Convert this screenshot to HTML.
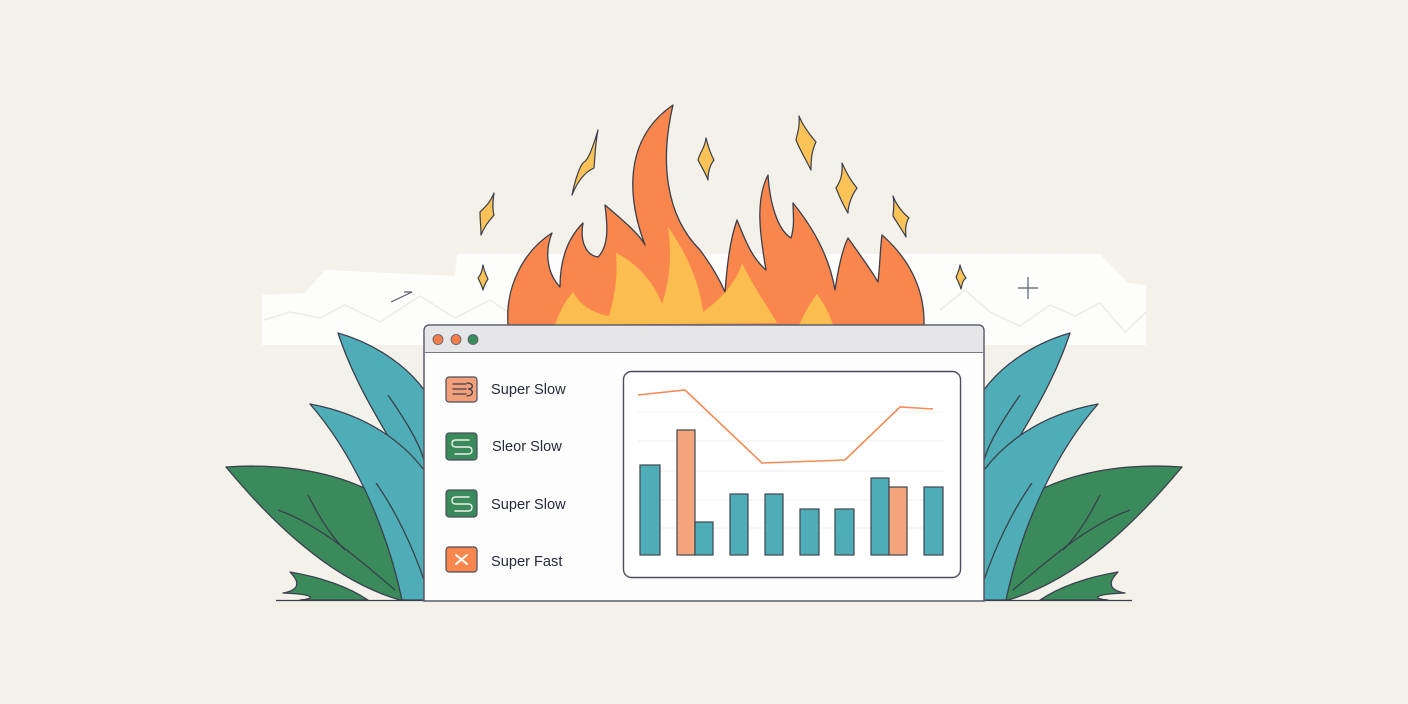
<!DOCTYPE html>
<html><head><meta charset="utf-8"><style>
html,body{margin:0;padding:0;background:#f4f1ea;}
svg{display:block}
text{font-family:"Liberation Sans",sans-serif;}
</style></head><body>
<svg width="1408" height="704" viewBox="0 0 1408 704" xmlns="http://www.w3.org/2000/svg">
<rect width="1408" height="704" fill="#f4f1ea"/>
<polygon points="262,295 305,293 325,270 455,276 457,254 1100,254 1128,283 1146,285 1146,345 262,345" fill="#fdfdfc"/>
<polyline points="264,320 290,312 320,318 345,305 380,322 420,296 455,318 490,300 520,320" fill="none" stroke="#ecebea" stroke-width="1.5"/>
<polyline points="940,310 965,290 990,312 1020,326 1050,305 1075,316 1100,303 1125,332 1146,312" fill="none" stroke="#ecebea" stroke-width="1.5"/>
<path d="M508,325 C505,285 525,250 552,233 C545,250 546,272 560,287 C560,260 568,238 583,223 C580,240 585,255 598,257 C610,245 607,222 605,205 C625,222 640,235 645,245 C628,200 622,140 673,105 C660,160 665,215 700,250 C715,270 722,285 725,292 C727,265 730,240 737,220 C745,240 752,258 766,270 C760,235 755,200 768,175 C770,205 778,230 791,238 C795,225 793,213 793,203 C815,230 830,260 835,290 C838,270 842,250 848,238 C860,255 870,268 878,282 C880,265 880,250 882,235 C905,255 925,285 924,325 Z" fill="#f9874d" stroke="#3a3f4b" stroke-width="1.3" stroke-linejoin="round"/>
<path d="M555,325 C560,310 566,300 573,292 C580,305 592,313 609,316 C615,295 618,275 616,253 C640,265 655,285 662,304 C670,280 672,255 668,227 C688,255 700,285 703,312 C720,300 737,282 742,263 C755,290 770,310 777,323 Z" fill="#fbbd4f"/>
<path d="M799,325 C805,312 812,300 817,294 C825,305 830,315 833,325 Z" fill="#fbbd4f"/>
<g fill="#fbc357" stroke="#3a3f4b" stroke-width="1.2" stroke-linejoin="round">
<path d="M598,130 C592,150 588,160 584,162 C580,165 575,180 572,195 C578,180 585,172 594,168 C595,158 595,145 598,130 Z"/>
<path d="M494,193 C490,203 485,207 480,212 C480,220 481,228 481,235 C485,225 490,220 494,215 C492,208 493,200 494,193 Z"/>
<path d="M706,138 C705,148 700,152 698,160 C702,168 705,172 708,180 C708,172 710,165 714,160 C710,153 708,146 706,138 Z"/>
<path d="M799,116 C800,128 797,134 796,140 C800,150 805,158 811,170 C811,158 812,150 816,142 C810,135 803,126 799,116 Z"/>
<path d="M842,163 C843,175 840,182 836,188 C840,198 843,205 848,213 C848,205 852,195 857,188 C850,180 846,172 842,163 Z"/>
<path d="M893,196 C895,206 893,212 893,216 C898,224 902,230 906,237 C905,228 906,222 909,218 C902,212 896,204 893,196 Z"/>
<path d="M483,265 C482,272 480,276 478,278 C480,282 482,286 483,290 C484,286 486,282 488,279 C486,275 484,270 483,265 Z"/>
<path d="M960,265 C959,271 957,275 956,277 C958,281 960,285 961,289 C962,284 963,280 966,278 C963,274 961,270 960,265 Z"/>
</g>
<g stroke="#5a5e6a" stroke-width="1.2" fill="none">
<path d="M1028,277 V299 M1018,288 H1038"/>
<path d="M391,302 L412,292 L404,292"/>
</g>
<g id="lv" stroke="#3a3f4b" stroke-width="1.3" stroke-linejoin="round">
<path d="M226,467 C300,462 360,478 400,510 L424,600 L400,600 C330,580 270,520 226,467 Z" fill="#3a8a5c"/>
<path d="M290,572 C325,578 350,588 368,600 L300,600 C320,598 310,594 283,593 C300,590 300,582 290,572 Z" fill="#3a8a5c"/>
<path d="M338,333 C380,345 410,370 424,390 L424,500 C400,450 360,400 338,333 Z" fill="#4fadb8"/>
<path d="M310,404 C370,415 405,445 424,470 L424,600 L402,600 C385,520 350,450 310,404 Z" fill="#4fadb8"/>
<g fill="none">
<path d="M388,395 C405,420 418,440 424,460"/>
<path d="M376,483 C395,510 412,545 424,580"/>
<path d="M278,510 C320,525 360,560 395,590"/>
<path d="M308,495 C318,515 330,535 345,550"/>
</g>
</g>
<use href="#lv" transform="translate(1408,0) scale(-1,1)"/>
<line x1="276" y1="600.5" x2="1132" y2="600.5" stroke="#3a3f4b" stroke-width="1.3"/>
<path d="M424,601 V331 Q424,325 430,325 H978 Q984,325 984,331 V601 Z" fill="#fdfdfd" stroke="#5a5e6a" stroke-width="1.5"/>
<path d="M425,352 V331 Q425,326 430,326 H978 Q983,326 983,331 V352 Z" fill="#e6e6e8"/>
<line x1="424" y1="352.5" x2="984" y2="352.5" stroke="#7a7d86" stroke-width="1"/>
<circle cx="438" cy="339.5" r="5" fill="#f27e4a" stroke="#5a5e6a" stroke-width="0.8"/>
<circle cx="456" cy="339.5" r="5" fill="#f27e4a" stroke="#5a5e6a" stroke-width="0.8"/>
<circle cx="473" cy="339.5" r="5" fill="#3a8a5c" stroke="#5a5e6a" stroke-width="0.8"/>
<g stroke="#4a4e5a" stroke-width="1.2">
<rect x="446" y="377" width="31" height="25" rx="3" fill="#f3a07a"/>
<rect x="446" y="433" width="31" height="27" rx="3" fill="#3a8a5c"/>
<rect x="446" y="490" width="31" height="27" rx="3" fill="#3a8a5c"/>
<rect x="446" y="547" width="31" height="25" rx="3" fill="#f9874d"/>
</g>
<g stroke="#3a3f4b" stroke-width="1.3" fill="none" stroke-linecap="round">
<path d="M453,384 H466 M453,389 H466 M453,394 H466 M467,383 C474,383 474,389 468,389 C474,389 474,396 467,396"/>
</g>
<g stroke="#eef0ea" stroke-width="1.4" fill="none" stroke-linecap="round">
<path d="M469,440 H456 Q452,440 452,443.5 Q452,447 456,447 H468 Q472,447 472,450.5 Q472,454 468,454 H455"/>
<path d="M469,497 H456 Q452,497 452,500.5 Q452,504 456,504 H468 Q472,504 472,507.5 Q472,511 468,511 H455"/>
<path d="M456,555 L467,564 M467,555 L456,564" stroke="#fff" stroke-width="2"/>
</g>
<g font-size="14.6" fill="#262a3a">
<text x="491" y="394">Super Slow</text>
<text x="492" y="451">Sleor Slow</text>
<text x="491" y="509">Super Slow</text>
<text x="491" y="566">Super Fast</text>
</g>
<rect x="623.5" y="371.5" width="337" height="206" rx="8" fill="#fff" stroke="#4a4e5a" stroke-width="1.4"/>
<g stroke="#efefef" stroke-width="1">
<line x1="638" y1="412" x2="945" y2="412"/><line x1="638" y1="441" x2="945" y2="441"/>
<line x1="638" y1="471" x2="945" y2="471"/><line x1="638" y1="500" x2="945" y2="500"/>
<line x1="638" y1="528" x2="945" y2="528"/>
</g>
<g stroke="#3f4550" stroke-width="1.2">
<rect x="640" y="465" width="20" height="90" fill="#4fadb8"/>
<rect x="677" y="430" width="18" height="125" fill="#f5a57c"/>
<rect x="695" y="522" width="18" height="33" fill="#4fadb8"/>
<rect x="730" y="494" width="18" height="61" fill="#4fadb8"/>
<rect x="765" y="494" width="18" height="61" fill="#4fadb8"/>
<rect x="800" y="509" width="19" height="46" fill="#4fadb8"/>
<rect x="835" y="509" width="19" height="46" fill="#4fadb8"/>
<rect x="871" y="478" width="18" height="77" fill="#4fadb8"/>
<rect x="889" y="487" width="18" height="68" fill="#f5a57c"/>
<rect x="924" y="487" width="19" height="68" fill="#4fadb8"/>
</g>
<polyline points="638,395 685,390 762,463 845,460 900,407 933,409" fill="none" stroke="#f58a55" stroke-width="1.6"/>
</svg>
</body></html>
